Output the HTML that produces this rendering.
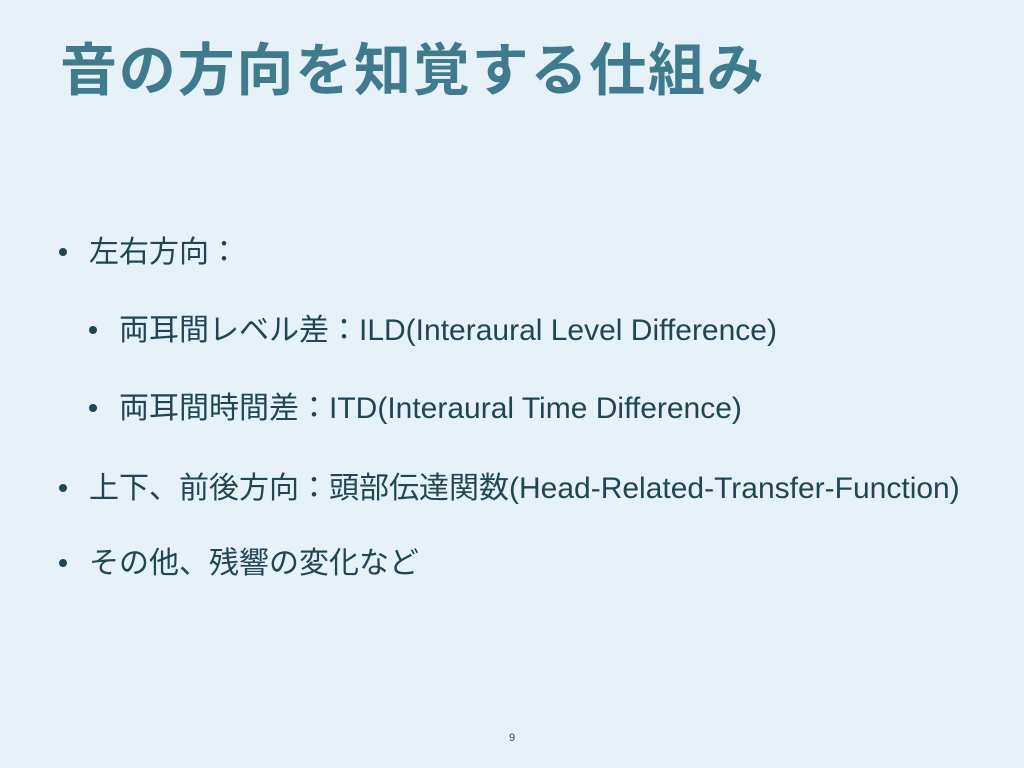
<!DOCTYPE html>
<html><head><meta charset="utf-8"><style>
html,body{margin:0;padding:0}
body{width:1024px;height:768px;background:#e6f1f8;position:relative;overflow:hidden;font-family:"Liberation Sans","Noto Sans CJK JP",sans-serif;color:#1f4652}
.t{position:absolute;left:60px;top:35px;font-size:57px;font-weight:bold;color:#3f7b8c;letter-spacing:1.8px;white-space:nowrap;line-height:72px}
.l{position:absolute;font-size:30px;white-space:nowrap;line-height:36px}
.b{position:absolute;width:8px;height:8px;border-radius:50%;background:#1f4652}
.p{position:absolute;left:0;width:1024px;text-align:center;top:732px;font-size:11px}
</style></head><body>
<div class="t">音の方向を知覚する仕組み</div>
<div class="b" style="left:59px;top:248px"></div><div class="l" style="left:89px;top:235px">左右方向：</div>
<div class="b" style="left:89px;top:326px"></div><div class="l" style="left:119px;top:313px">両耳間レベル差：ILD(Interaural Level Difference)</div>
<div class="b" style="left:89px;top:404px"></div><div class="l" style="left:119px;top:391px">両耳間時間差：ITD(Interaural Time Difference)</div>
<div class="b" style="left:59px;top:484px"></div><div class="l" style="left:89px;top:471px">上下、前後方向：頭部伝達関数(Head-Related-Transfer-Function)</div>
<div class="b" style="left:59px;top:559px"></div><div class="l" style="left:89px;top:546px">その他、残響の変化など</div>
<div class="p">9</div>
</body></html>
